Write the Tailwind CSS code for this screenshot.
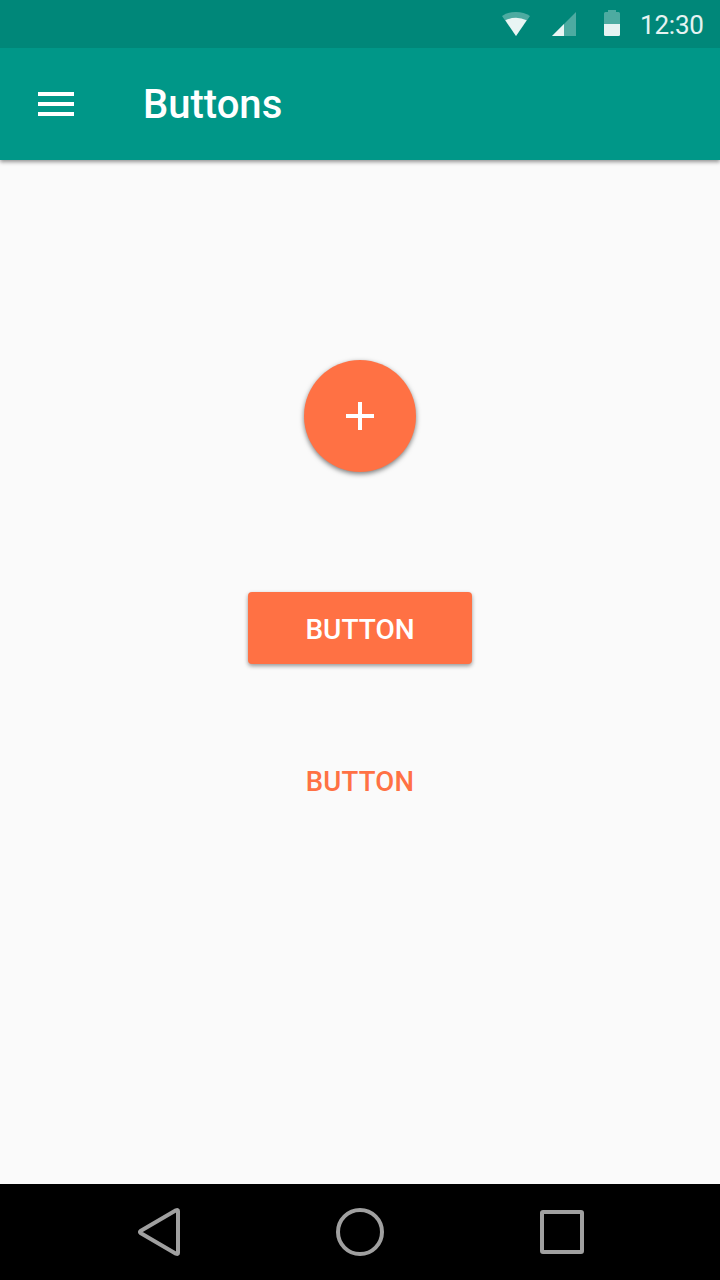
<!DOCTYPE html>
<html lang="en">
<head>
<meta charset="utf-8">
<title>Buttons</title>
<script src="https://cdn.jsdelivr.net/npm/@tailwindcss/browser@4"></script>
</head>
<body class="w-[720px] h-[1280px] overflow-hidden flex flex-col bg-[#fafafa] font-['Roboto',sans-serif]">
<header class="z-10 shrink-0 bg-[#009788] shadow-[0_2px_4px_rgba(0,0,0,0.42)]">
  <div class="h-12 bg-[#008779] flex items-center justify-end pr-4">
    <svg class="w-[120px] h-12 mr-5 shrink-0" viewBox="500 0 120 48" fill="#fff">
      <path opacity=".3" d="M516 36L502 15.9Q508 12 516 12T530 15.9Z"/>
      <path opacity=".88" d="M516 36L505.3 20.3Q510.4 17.8 516 17.8T526.7 20.3Z"/>
      <path opacity=".3" d="M552 36L576 12V36Z"/>
      <path opacity=".88" d="M552 36L564 24V36Z"/>
      <path opacity=".3" d="M604 24V13.500Q604 12 605.500 12H608V10H616V12H618.500Q620 12 620 13.500V24Z"/>
      <path opacity=".9" d="M604 24H620V34.500Q620 36 618.500 36H605.500Q604 36 604 34.500Z"/>
    </svg>
    <span class="w-16 text-[26px] leading-[46px] tracking-[-0.2px] whitespace-nowrap text-white/90 pt-[2px]">12:30</span>
  </div>
  <div class="h-28 flex items-center pl-8">
    <button class="w-12 h-12" aria-label="Menu">
      <svg class="w-12 h-12" viewBox="0 0 48 48" fill="#fff"><path d="M6 12H42V16H6ZM6 22H42V26H6ZM6 32H42V36H6Z"/></svg>
    </button>
    <h1 class="ml-[63px] pt-[2px] text-[40px] leading-[48px] font-medium text-white">Buttons</h1>
  </div>
</header>
<main class="flex-1 flex flex-col items-center pt-[200px]">
  <button class="w-28 h-28 rounded-full bg-[#ff7144] flex items-center justify-center shadow-[0_2px_5px_rgba(0,0,0,0.5)]" aria-label="Add">
    <svg class="w-12 h-12" viewBox="0 0 48 48" fill="#fff"><path d="M22 10H26V22H38V26H26V38H22V26H10V22H22Z"/></svg>
  </button>
  <button class="mt-[120px] w-56 h-[72px] rounded-[4px] bg-[#ff7144] text-white text-[28px] leading-[32px] font-medium pt-[3px] shadow-[0_2px_4px_rgba(0,0,0,0.4)]">BUTTON</button>
  <button class="mt-[80px] w-56 h-[72px] text-[#ff7144] text-[27.5px] leading-[32px] tracking-[0.25px] font-medium pt-[4px]">BUTTON</button>
</main>
<nav class="h-24 shrink-0 bg-black">
  <svg class="w-[720px] h-24" viewBox="0 0 720 96" fill="none" stroke="#a0a0a0" stroke-width="4" stroke-linejoin="round">
    <path d="M178 27V69Q178 70.500 176 69.700L140.500 49Q139.300 48 140.500 47L176 26.300Q178 25.500 178 27Z"/>
    <circle cx="360" cy="48" r="22"/>
    <rect x="542" y="28" width="40" height="40" rx="1"/>
  </svg>
</nav>
</body>
</html>
